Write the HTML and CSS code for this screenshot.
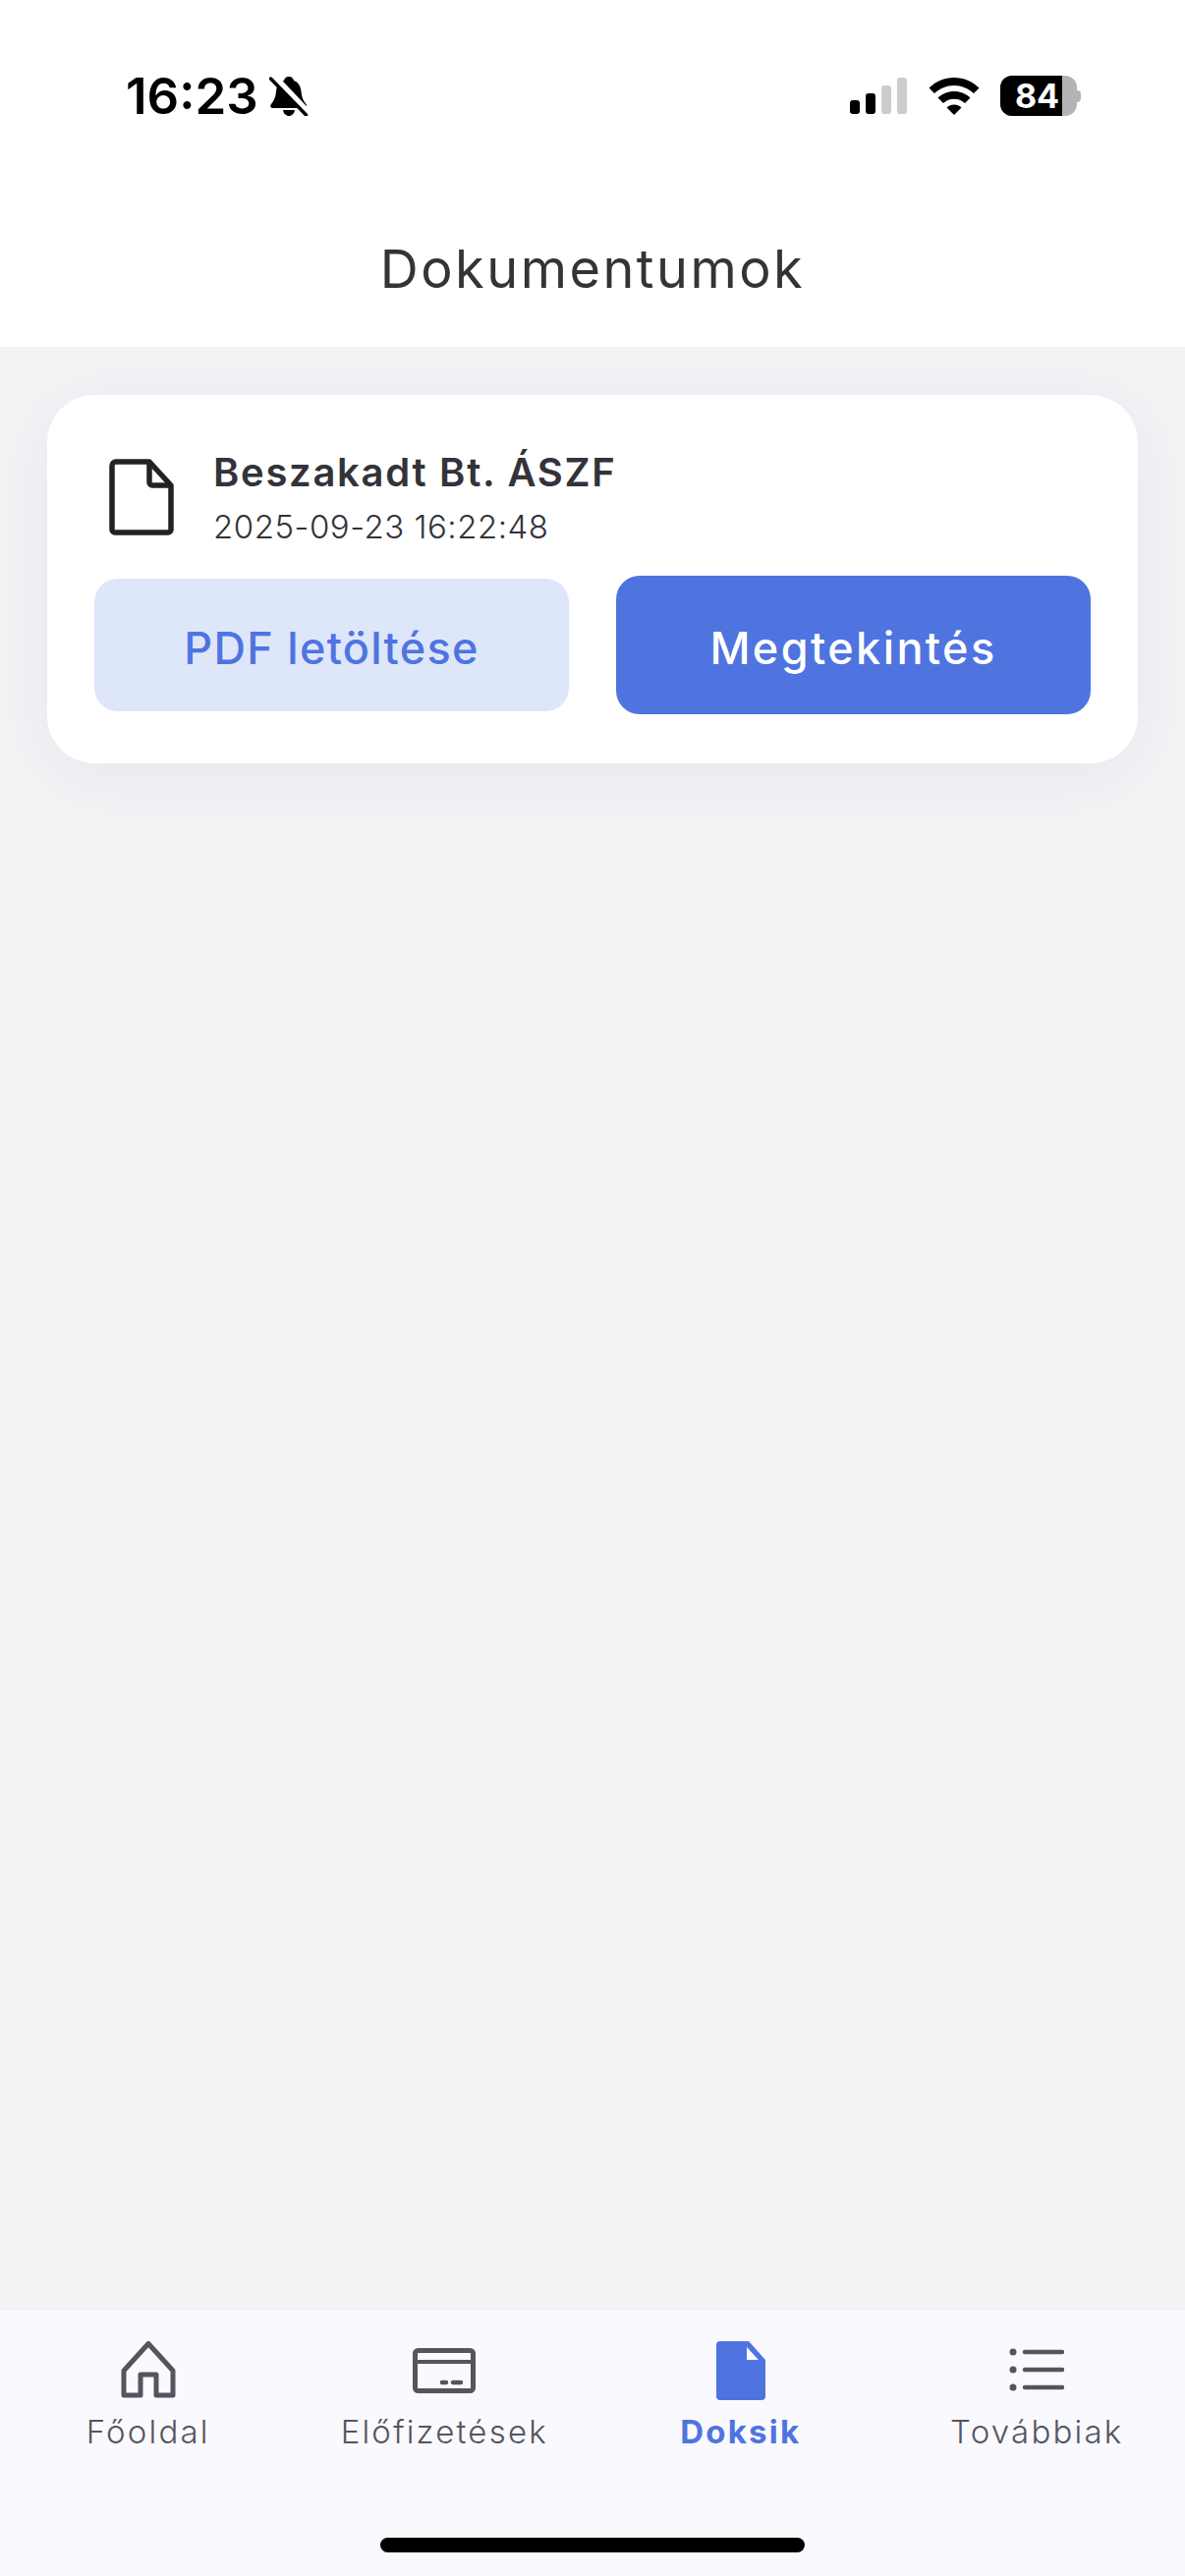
FILE: index.html
```html
<!DOCTYPE html>
<html lang="hu">
<head>
  <meta charset="UTF-8">
  <title>Dokumentumok</title>
  <link rel="stylesheet" href="styles.css">
</head>
<body>

<div class="page">
  <header class="top">
    <div class="status">
      <div class="status-left">
        <span class="clock">16:23</span>
        <svg class="bell" width="40" height="40" viewBox="0 0 40 40">
          <path d="M20 0c3 0 4.500 2 5 4 5 2 7 6 7.500 11 .5 6 2 9 5 13 1.500 2 .5 4-2 4H4c-2.500 0-3.500-2-2-4 3-4 4.500-7 5-13C7.500 10 9.500 6 15 4c.5-2 2-4 5-4z" fill="#000"/>
          <path d="M14 34h12c-.5 3.500-3 6-6 6s-5.500-2.500-6-6z" fill="#000"/>
          <path d="M3 -1L39 37" stroke="#fff" stroke-width="8"/>
          <path d="M1.500 2L37.500 39" stroke="#000" stroke-width="3.500" stroke-linecap="round"/>
        </svg>
      </div>
      <div class="status-right">
        <div class="signal">
          <i class="bar bar1"></i><i class="bar bar2"></i><i class="bar bar3"></i><i class="bar bar4"></i>
        </div>
        <svg class="wifi" width="52" height="38" viewBox="0 0 52 38">
          <path d="M26 0c10 0 18.500 4 25.500 10.500L46 16C40.500 11 33.500 8 26 8S11.500 11 6 16L.5 10.500C7.500 4 16 0 26 0z" fill="#000"/>
          <path d="M26 14c6.500 0 12 2.500 16.500 6.500L37 26c-3-2.700-6.800-4.200-11-4.200S18 23.300 15 26l-5.500-5.500C14 16.500 19.500 14 26 14z" fill="#000"/>
          <path d="M26 27.500c3 0 5.500 1 7.500 3L26 38l-7.500-7.500c2-2 4.500-3 7.500-3z" fill="#000"/>
        </svg>
        <div class="battery">
          <div class="battery-body"><span class="battery-fill">84</span></div>
          <i class="battery-nub"></i>
        </div>
      </div>
    </div>
    <h1 class="title">Dokumentumok</h1>
  </header>

  <main class="content">
    <section class="card">
      <div class="doc-row">
        <svg class="doc-icon" width="66" height="78" viewBox="0 0 66 78">
          <path d="M7 3h34l22 24v45a3 3 0 0 1-3 3H6a3 3 0 0 1-3-3V7a4 4 0 0 1 4-4z" fill="none" stroke="#222" stroke-width="5.500" stroke-linejoin="round"/>
          <path d="M41 3v21a3 3 0 0 0 3 3h19" fill="none" stroke="#222" stroke-width="5.500" stroke-linejoin="round"/>
        </svg>
        <div class="doc-text">
          <div class="doc-name">Beszakadt Bt. ÁSZF</div>
          <div class="doc-date">2025-09-23 16:22:48</div>
        </div>
      </div>
      <div class="actions">
        <button class="btn btn-light">PDF letöltése</button>
        <button class="btn btn-primary">Megtekintés</button>
      </div>
    </section>
  </main>

  <nav class="tabbar">
    <div class="tabs">
      <div class="tab">
        <svg width="60" height="60" viewBox="0 0 60 60">
          <path d="M30 2.500L5 30v25h17V34h16v21h17V30z" fill="none" stroke="#55555f" stroke-width="5" stroke-linejoin="round"/>
        </svg>
        <span>Főoldal</span>
      </div>
      <div class="tab">
        <svg width="66" height="60" viewBox="0 0 66 60">
          <rect x="3.500" y="9.500" width="59" height="41" rx="3" fill="none" stroke="#55555f" stroke-width="5"/>
          <path d="M3.500 21h59" stroke="#55555f" stroke-width="4"/>
          <path d="M31 42h4M42 42h8" stroke="#55555f" stroke-width="4.500" stroke-linecap="round"/>
        </svg>
        <span>Előfizetések</span>
      </div>
      <div class="tab tab-active">
        <svg width="50" height="60" viewBox="0 0 50 60">
          <path d="M4 0h29l17 19v37a4 4 0 0 1-4 4H4a4 4 0 0 1-4-4V4a4 4 0 0 1 4-4z" fill="#4f74e0"/>
          <path d="M31 6v13h12z" fill="#f9f9fe"/>
        </svg>
        <span>Doksik</span>
      </div>
      <div class="tab">
        <svg width="56" height="60" viewBox="0 0 56 60">
          <circle cx="4" cy="11" r="3.500" fill="#55555f"/>
          <circle cx="4" cy="29" r="3.500" fill="#55555f"/>
          <circle cx="4" cy="47" r="3.500" fill="#55555f"/>
          <path d="M16 11h38M16 29h38M16 47h38" stroke="#55555f" stroke-width="4.500" stroke-linecap="round"/>
        </svg>
        <span>Továbbiak</span>
      </div>
    </div>
    <div class="home-bar"></div>
  </nav>
</div>

</body>
</html>
```

FILE: styles.css
```css
* { box-sizing: border-box; }
body {
  margin: 0;
  font-family: Inter, "Noto Sans", sans-serif;
  background: #f2f3f5;
}
.page {
  display: flex;
  flex-direction: column;
  height: 2622px;
  overflow: hidden;
}

/* top */
.top {
  height: 353px;
  padding-top: 77px;
  background: #fff;
  position: relative;
  z-index: 1;
}
.status {
  display: flex;
  justify-content: space-between;
  align-items: center;
  height: 41px;
  padding: 0 106px 0 128px;
}
.status-left { display: flex; align-items: center; gap: 11px; }
.clock {
  font-size: 51px;
  font-weight: 600;
  color: #000;
  line-height: 41px;
}
.status-right { display: flex; align-items: center; }
.signal { display: flex; align-items: flex-end; gap: 6px; height: 37px; margin-right: 22px; }
.bar { display: block; width: 10px; border-radius: 3px; background: #ccc; }
.bar1 { height: 14px; background: #000; }
.bar2 { height: 21px; background: #000; }
.bar3 { height: 29px; }
.bar4 { height: 37px; }
.wifi { margin-right: 21px; }
.battery { display: flex; align-items: center; }
.battery-body {
  width: 78px;
  height: 41px;
  border-radius: 12px;
  background: #b4b4b4;
  overflow: hidden;
}
.battery-fill {
  display: block;
  width: 63px;
  height: 41px;
  background: #000;
  color: #fff;
  font-size: 34px;
  font-weight: 700;
  line-height: 41px;
  text-align: right;
  padding-right: 3px;
}
.battery-nub {
  display: block;
  width: 4px;
  height: 12px;
  background: #b4b4b4;
  border-radius: 0 4px 4px 0;
}
.title {
  margin: 0;
  padding-top: 126px;
  text-align: center;
  font-size: 54px;
  font-weight: 400;
  line-height: 60px;
  color: #333338;
  letter-spacing: 2.5px;
}

/* card */
.content { flex: 1; padding: 49px 48px 0; }
.card {
  height: 375px;
  padding: 0 48px;
  background: #fff;
  border-radius: 48px;
  box-shadow: 0 12px 70px rgba(40,50,90,0.06);
}
.doc-row {
  display: flex;
  height: 184px;
  padding-top: 55px;
}
.doc-icon { margin: 10px 0 0 15px; }
.doc-text { margin-left: 40px; }
.doc-name {
  font-size: 40px;
  font-weight: 600;
  line-height: 48px;
  color: #333338;
  letter-spacing: 1.7px;
}
.doc-date {
  margin-top: 11px;
  font-size: 33px;
  font-weight: 300;
  line-height: 40px;
  color: #333338;
  letter-spacing: 0.5px;
}
.actions {
  display: grid;
  grid-template-columns: 1fr 1fr;
  gap: 48px;
  align-items: center;
}
.btn {
  border: none;
  border-radius: 24px;
  font-family: inherit;
  font-size: 45px;
  font-weight: 500;
  padding: 6px 0 0;
}
.btn-light { height: 135px; background: #dee6fa; color: #4f74e0; letter-spacing: 1.3px; }
.btn-primary { height: 141px; background: #4f74e0; color: #fff; letter-spacing: 2.4px; }

/* bottom nav */
.tabbar { height: 270px; background: #f9f9fe; }
.tabs { display: grid; grid-template-columns: repeat(4, 1fr); padding-top: 31px; }
.tab {
  display: flex;
  flex-direction: column;
  align-items: center;
  font-size: 33px;
  font-weight: 300;
  line-height: 40px;
  color: #55555f;
  letter-spacing: 2.2px;
}
.tab svg { display: block; margin-bottom: 12px; }
.tab-active { color: #4f74e0; font-weight: 700; }
.home-bar {
  width: 432px;
  height: 15px;
  margin: 88px auto 0;
  border-radius: 8px;
  background: #000;
}
```
